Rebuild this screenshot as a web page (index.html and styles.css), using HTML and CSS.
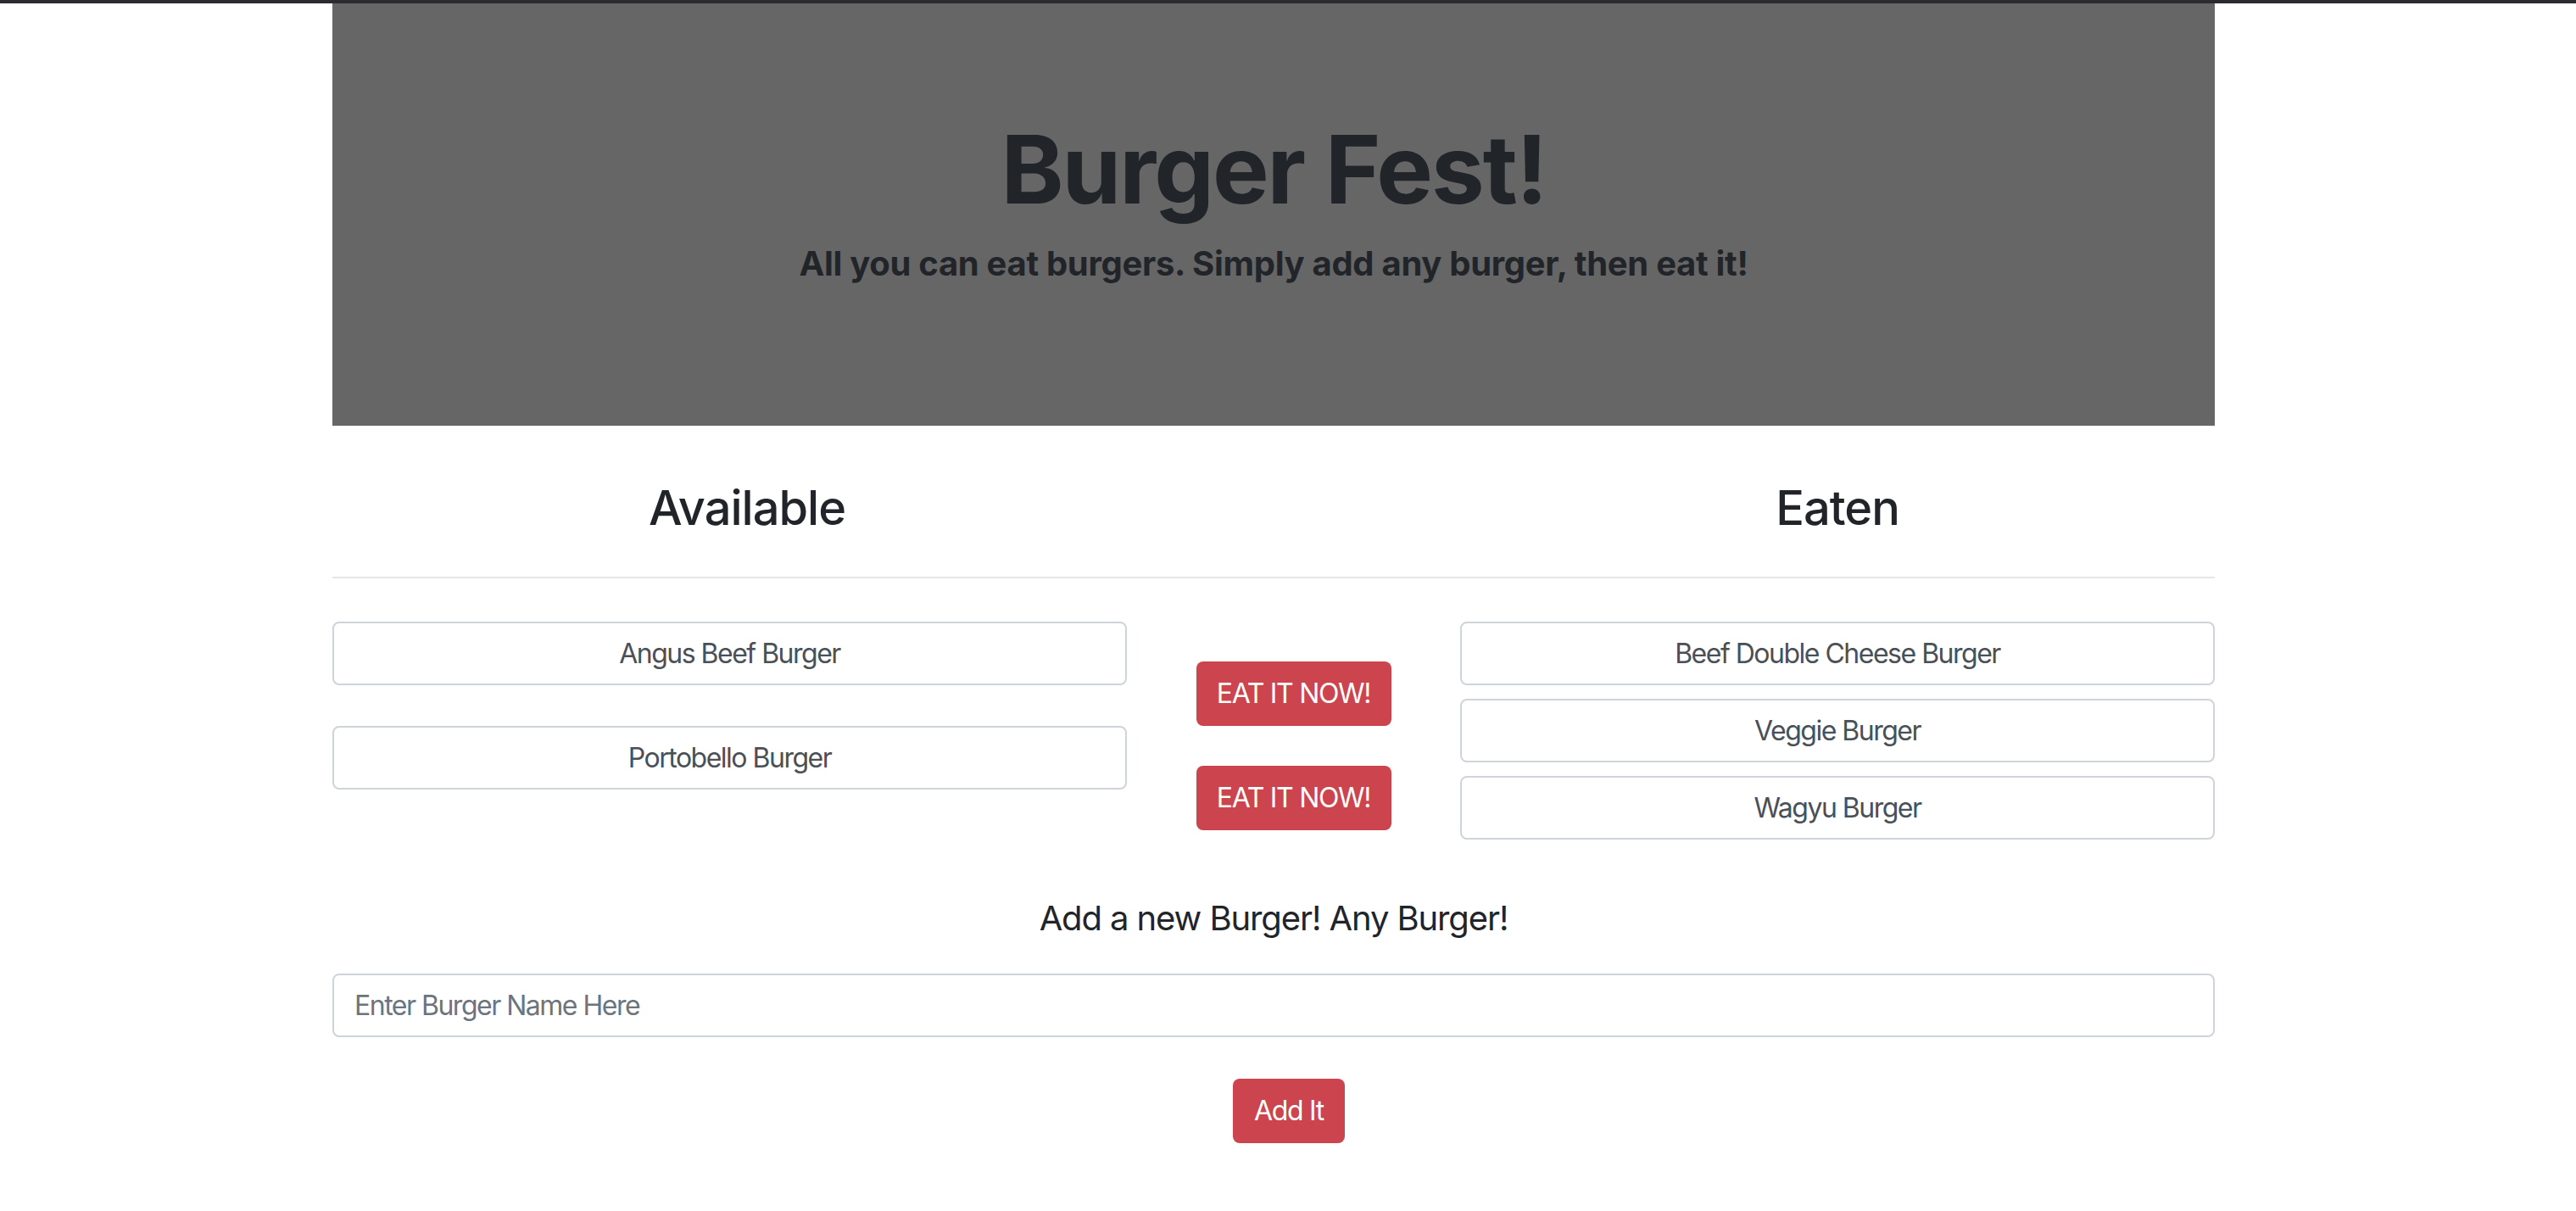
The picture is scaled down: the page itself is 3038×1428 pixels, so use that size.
FILE: index.html
```html
<!DOCTYPE html>
<html lang="en">
<head>
<meta charset="utf-8">
<title>Burger Fest!</title>
<link rel="stylesheet" href="styles.css">
</head>
<body>
<div class="topbar"></div>
<div class="container">
  <header class="jumbotron">
    <h1 class="title">Burger Fest!</h1>
    <h5 class="lead">All you can eat burgers. Simply add any burger, then eat it!</h5>
  </header>

  <div class="heads">
    <h3 class="col-head">Available</h3>
    <h3 class="col-head">Eaten</h3>
  </div>
  <hr class="divider">

  <div class="lists">
    <div class="avail">
      <div class="pair">
        <div class="item">Angus Beef Burger</div>
        <div class="btn-cell"><button class="btn btn-eat">EAT IT NOW!</button></div>
      </div>
      <div class="pair">
        <div class="item">Portobello Burger</div>
        <div class="btn-cell"><button class="btn btn-eat">EAT IT NOW!</button></div>
      </div>
    </div>
    <div class="eaten">
      <div class="item">Beef Double Cheese Burger</div>
      <div class="item">Veggie Burger</div>
      <div class="item">Wagyu Burger</div>
    </div>
  </div>

  <h5 class="add-title">Add a new Burger! Any Burger!</h5>
  <input class="burger-input" type="text" placeholder="Enter Burger Name Here">
  <div class="add-row"><button class="btn btn-add">Add It</button></div>
</div>
</body>
</html>
```

FILE: styles.css
```css
* { box-sizing: border-box; }

html, body {
  margin: 0;
  padding: 0;
  background: #ffffff;
  font-family: Inter, "Noto Sans", "Liberation Sans", sans-serif;
  color: #212529;
}

.topbar {
  height: 4px;
  background: #2c2c30;
}

.container {
  width: 2220px;
  margin-left: 392px;
}

.jumbotron {
  background: #666666;
  padding: 128px 32px 167px;
  text-align: center;
}

.title {
  margin: 0 0 21px;
  font-size: 112px;
  line-height: 1.2;
  font-weight: 700;
  letter-spacing: -2px;
  color: #212529;
}

.lead {
  margin: 0;
  font-size: 40px;
  line-height: 1.2;
  font-weight: 700;
  letter-spacing: -0.3px;
  color: #212529;
}

.heads {
  margin-top: 64px;
  display: grid;
  grid-template-columns: 978px 890px;
  justify-content: space-between;
}

.col-head {
  margin: 0 0 16px;
  text-align: center;
  font-size: 56px;
  line-height: 1.2;
  font-weight: 500;
  letter-spacing: -1px;
  color: #212529;
}

.divider {
  margin: 30px 0 0;
  border: 0;
  border-top: 2px solid #e6e6e6;
  height: 0;
}

.lists {
  padding-top: 51px;
  display: grid;
  grid-template-columns: 1270px 890px;
  justify-content: space-between;
  align-items: start;
}

.pair {
  display: grid;
  grid-template-columns: 937px 273px;
  column-gap: 60px;
  align-items: start;
  height: 123px;
}

.btn-cell {
  display: flex;
  justify-content: center;
  padding-top: 47px;
}

.item {
  height: 75px;
  border: 2px solid #ced4da;
  border-radius: 8px;
  display: flex;
  align-items: center;
  justify-content: center;
  font-size: 32px;
  letter-spacing: -1.5px;
  color: #495057;
  background: #fff;
}

.eaten {
  display: flex;
  flex-direction: column;
  gap: 16px;
}

.btn {
  font-family: inherit;
  border: 0;
  border-radius: 8px;
  background: #cb444e;
  color: #ffffff;
  font-size: 32px;
  line-height: 1.5;
  letter-spacing: -1.3px;
  cursor: pointer;
}

.btn-eat {
  width: 230px;
  height: 76px;
  padding: 0 20px;
  white-space: nowrap;
}

.add-title {
  margin: 69px 0 0;
  text-align: center;
  font-size: 40px;
  line-height: 1.2;
  font-weight: 400;
  letter-spacing: -1.1px;
  color: #212529;
}

.burger-input {
  display: block;
  width: 100%;
  height: 75px;
  margin-top: 41px;
  padding: 0 24px;
  border: 2px solid #ced4da;
  border-radius: 8px;
  font-family: inherit;
  font-size: 32px;
  letter-spacing: -1.5px;
  color: #495057;
  background: #fff;
}

.burger-input::placeholder {
  color: #6c757d;
  opacity: 1;
}

.add-row {
  display: flex;
  justify-content: center;
  margin-top: 49px;
  padding-left: 36px;
}

.btn-add {
  width: 132px;
  height: 76px;
  padding: 0;
}
```
